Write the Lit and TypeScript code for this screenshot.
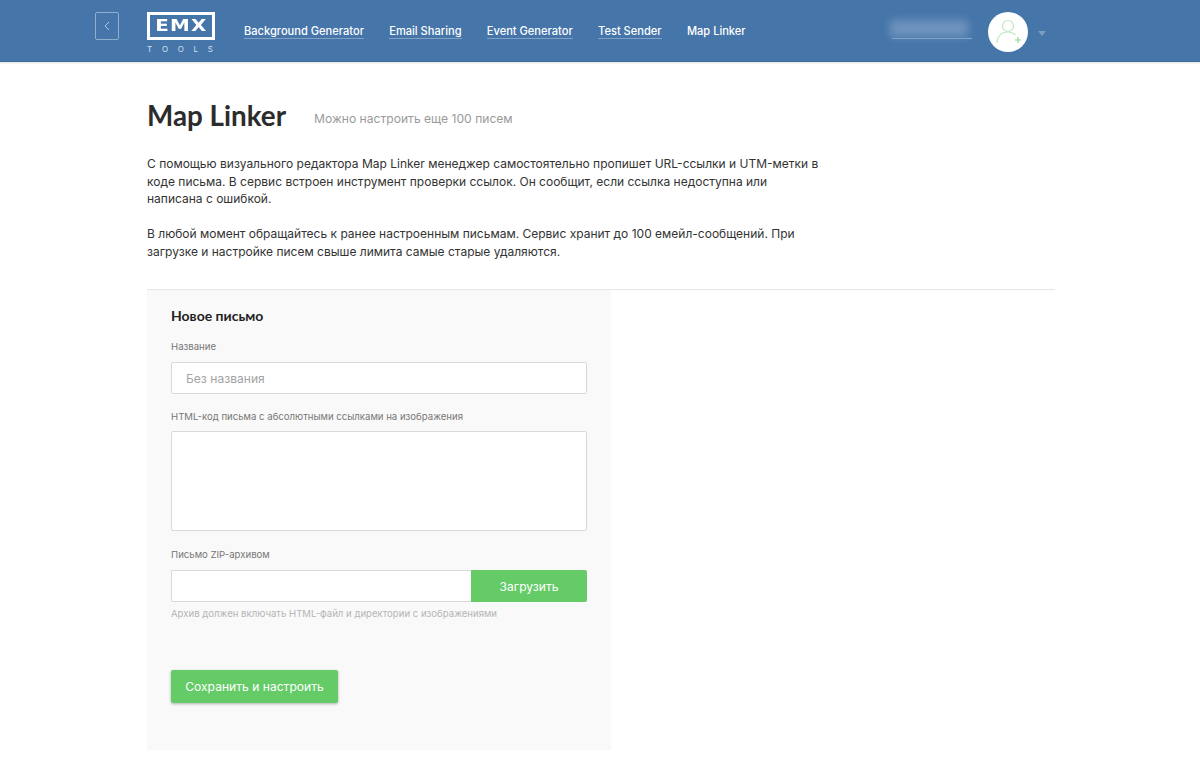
import { LitElement, html, css } from 'lit';
import { customElement } from 'lit/decorators.js';

const NAV = [
  { label: 'Background Generator', underline: true },
  { label: 'Email Sharing', underline: true },
  { label: 'Event Generator', underline: true },
  { label: 'Test Sender', underline: true },
  { label: 'Map Linker', underline: false },
];

@customElement('app-root')
export class AppRoot extends LitElement {
  static styles = css`
    :host {
      display: block;
      min-height: 765px;
      background: #fff;
      font-family: Inter, 'Noto Sans', sans-serif;
      color: #2f2f2f;
    }

    /* шапка */
    .header {
      height: 62px;
      box-sizing: border-box;
      display: flex;
      align-items: flex-start;
      padding-left: 95px;
      background: #4575a9;
      border-bottom: 1px solid #3f6c9e;
      box-shadow: 0 1px 2px rgba(0, 0, 0, 0.12);
    }
    .back {
      width: 24px;
      height: 28px;
      margin-top: 12px;
      box-sizing: border-box;
      border: 1px solid #8eadcf;
      border-radius: 2px;
      display: flex;
      align-items: center;
      justify-content: center;
    }
    .logo {
      width: 68px;
      margin: 12px 0 0 28px;
      color: #fff;
    }
    .logo-box {
      height: 28px;
      box-sizing: border-box;
      border: 3px solid #fff;
      display: flex;
      align-items: center;
      justify-content: center;
      font-family: 'DejaVu Sans', sans-serif;
      font-weight: 700;
      font-size: 15.5px;
      letter-spacing: 1px;
    }
    .logo-box span {
      display: inline-block;
      transform: scaleX(1.28);
    }
    .logo-sub {
      display: flex;
      justify-content: space-between;
      margin-top: 5px;
      padding-right: 2px;
      font-size: 8px;
      line-height: 9px;
      color: #d5e0ec;
    }
    .nav {
      display: flex;
      gap: 25.25px;
      margin: 24px 0 0 29px;
    }
    .nav-item {
      font-size: 11.1px;
      font-weight: 500;
      line-height: 14px;
      color: #fff;
      border-bottom: 1px solid transparent;
    }
    .nav-item.linked {
      border-bottom-color: #7f9fc4;
    }
    .account {
      display: flex;
      align-items: flex-start;
      margin-left: 146px;
    }
    .username {
      width: 80px;
      height: 14px;
      margin-top: 24px;
      border-bottom: 1px solid #8aa8ca;
      position: relative;
    }
    .username::before {
      content: '';
      position: absolute;
      left: -2px;
      right: 4px;
      top: -4px;
      bottom: 1px;
      background: #6f94bd;
      filter: blur(4px);
    }
    .avatar {
      width: 40px;
      height: 40px;
      margin: 12px 0 0 16px;
      border-radius: 50%;
      background: #fff;
      display: flex;
      align-items: center;
      justify-content: center;
    }
    .caret {
      width: 0;
      height: 0;
      margin: 31px 0 0 10px;
      border-left: 4px solid transparent;
      border-right: 4px solid transparent;
      border-top: 5px solid #7f9dc0;
    }

    /* контент */
    .main {
      padding: 0 145px 0 147px;
    }
    .title-row {
      display: flex;
      align-items: center;
      padding-top: 33px;
    }
    h1 {
      margin: 0;
      font-family: Lato, sans-serif;
      font-size: 27.8px;
      line-height: 42px;
      font-weight: 700;
      color: #2c2c2c;
    }
    .limit {
      margin: 4px 0 0 28px;
      font-size: 12.1px;
      color: #9a9a9a;
    }
    .intro {
      width: 675px;
      margin-top: 18px;
      font-size: 12px;
      line-height: 17.6px;
      color: #333;
    }
    .intro p {
      margin: 0 0 17.6px;
    }
    .intro p:last-child {
      margin-bottom: 0;
    }
    .divider {
      margin-top: 28px;
      border-top: 1px solid #e6e6e6;
    }
    .panel {
      width: 464px;
      height: 460px;
      box-sizing: border-box;
      padding: 17px 24px 0;
      background: #f9f9f9;
    }
    h2 {
      margin: 0;
      font-family: Lato, sans-serif;
      font-size: 14px;
      line-height: 17px;
      font-weight: 700;
      color: #222;
    }
    label {
      display: block;
      font-size: 9.6px;
      line-height: 13px;
      color: #777;
    }
    .field {
      box-sizing: border-box;
      background: #fff;
      border: 1px solid #d9d9d9;
      border-radius: 2px;
    }
    .name-label {
      margin-top: 16px;
    }
    .name-input {
      height: 32px;
      margin-top: 9px;
      padding: 1px 0 0 14px;
      display: flex;
      align-items: center;
      font-size: 12.1px;
      color: #a3a3a3;
    }
    .html-label {
      margin-top: 16px;
    }
    .html-input {
      height: 100px;
      margin-top: 8px;
    }
    .zip-label {
      margin-top: 17px;
    }
    .zip-row {
      display: flex;
      height: 32px;
      margin-top: 9px;
    }
    .zip-input {
      flex: 1;
      border-right: none;
      border-radius: 2px 0 0 2px;
    }
    .upload {
      width: 116px;
      box-sizing: border-box;
      padding-top: 1px;
      display: flex;
      align-items: center;
      justify-content: center;
      background: #64cb67;
      border-radius: 0 2px 2px 0;
      color: #fff;
      font-size: 12.1px;
    }
    .hint {
      margin-top: 5px;
      font-size: 9.6px;
      line-height: 13px;
      color: #b5b5b5;
    }
    .save {
      display: inline-flex;
      align-items: center;
      justify-content: center;
      width: 167px;
      height: 33px;
      margin-top: 50px;
      background: #64cb67;
      border-radius: 2px;
      box-shadow: 0 1px 3px rgba(0, 0, 0, 0.3);
      color: #fff;
      font-size: 12.1px;
    }
  `;

  render() {
    return html`
      <header class="header">
        <div class="back">
          <svg width="6" height="10" viewBox="0 0 6 10" fill="none" stroke="#b3c8df" stroke-width="1">
            <path d="M5 1 1 5l4 4" />
          </svg>
        </div>
        <div class="logo">
          <div class="logo-box"><span>EMX</span></div>
          <div class="logo-sub"><span>T</span><span>O</span><span>O</span><span>L</span><span>S</span></div>
        </div>
        <nav class="nav">
          ${NAV.map(
            (item) => html`<span class="nav-item ${item.underline ? 'linked' : ''}">${item.label}</span>`
          )}
        </nav>
        <div class="account">
          <div class="username"></div>
          <div class="avatar">
            <svg width="30" height="30" viewBox="0 0 30 30" fill="none" stroke="#bfe9c1" stroke-width="1.2">
              <circle cx="15" cy="9" r="5.5" />
              <path d="M4 26c0-6.5 4.5-11 11-11 3 0 5.5 1 7.5 3" />
              <path d="M22 23h6M25 20v6" stroke="#8fdc92" />
            </svg>
          </div>
          <div class="caret"></div>
        </div>
      </header>
      <main class="main">
        <div class="title-row">
          <h1>Map Linker</h1>
          <span class="limit">Можно настроить еще 100 писем</span>
        </div>
        <div class="intro">
          <p>С помощью визуального редактора Map Linker менеджер самостоятельно пропишет URL-ссылки и UTM-метки в коде письма. В сервис встроен инструмент проверки ссылок. Он сообщит, если ссылка недоступна или написана с ошибкой.</p>
          <p>В любой момент обращайтесь к ранее настроенным письмам. Сервис хранит до 100 емейл-сообщений. При загрузке и настройке писем свыше лимита самые старые удаляются.</p>
        </div>
        <div class="divider"></div>
        <section class="panel">
          <h2>Новое письмо</h2>
          <label class="name-label">Название</label>
          <div class="field name-input">Без названия</div>
          <label class="html-label">HTML-код письма с абсолютными ссылками на изображения</label>
          <div class="field html-input"></div>
          <label class="zip-label">Письмо ZIP-архивом</label>
          <div class="zip-row">
            <div class="field zip-input"></div>
            <div class="upload">Загрузить</div>
          </div>
          <div class="hint">Архив должен включать HTML-файл и директории с изображениями</div>
          <div class="save">Сохранить и настроить</div>
        </section>
      </main>
    `;
  }
}
